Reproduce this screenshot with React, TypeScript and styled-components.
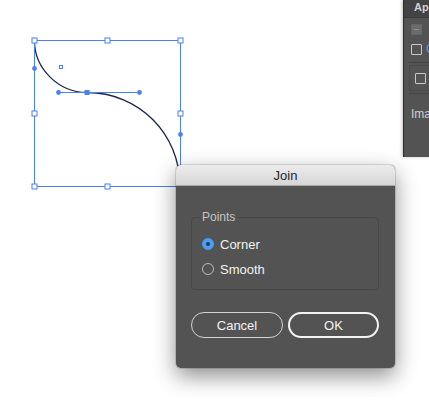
import React from "react";
import styled, { createGlobalStyle } from "styled-components";

const Global = createGlobalStyle`
  html, body { margin: 0; padding: 0; background: #ffffff; }
  body { font-family: "Liberation Sans", Arial, sans-serif; overflow: hidden; }
`;

const Stage = styled.div`
  position: relative;
  width: 429px;
  height: 403px;
  background: #ffffff;
  overflow: hidden;
`;

const Artwork = styled.svg`
  position: absolute;
  left: 0;
  top: 0;
`;

const SidePanel = styled.div`
  position: absolute;
  left: 403px;
  top: 0;
  width: 40px;
  height: 157px;
  background: #535353;
  border-left: 1px solid #2e2e2e;
  box-shadow: -1px 0 3px rgba(0, 0, 0, 0.25);
  display: flex;
  flex-direction: column;
  color: #cfcfcf;
  font-size: 12px;
`;

const PanelHeader = styled.div`
  height: 17px;
  background: #434343;
  border-bottom: 1px solid #3a3a3a;
  padding-left: 10px;
  font-size: 11px;
  font-weight: bold;
  line-height: 14px;
  color: #d2d2d2;
`;

const PanelRow = styled.div<{ $mt: number }>`
  display: flex;
  align-items: center;
  gap: 4px;
  margin-top: ${(p) => p.$mt}px;
  padding-left: 7px;
  height: 12px;
`;

const Check = styled.div<{ $disabled?: boolean }>`
  flex: none;
  width: 9px;
  height: 9px;
  border: 1px solid ${(p) => (p.$disabled ? "#666" : "#c9c9c9")};
  background: ${(p) => (p.$disabled ? "#6b6b6b" : "transparent")};
  border-radius: 1px;
  display: flex;
  align-items: center;
  justify-content: center;
  &::after {
    content: "";
    display: ${(p) => (p.$disabled ? "block" : "none")};
    width: 5px;
    height: 1px;
    background: #8e8e8e;
  }
`;

const BlueLabel = styled.span`
  color: #4a9ff5;
  font-size: 12px;
  white-space: nowrap;
`;

const PanelSep = styled.div<{ $mt: number }>`
  margin-top: ${(p) => p.$mt}px;
  margin-left: 5px;
  height: 1px;
  background: #454545;
`;

const PanelGroup = styled.div`
  margin: 2px 0 0 5px;
  height: 24px;
  border: 1px solid #4a4a4a;
  border-right: none;
  display: flex;
  align-items: center;
  padding-left: 5px;
`;

const PanelText = styled.div`
  margin-top: 13px;
  padding-left: 7px;
  font-size: 12px;
  color: #cfcfcf;
`;

const Dialog = styled.div`
  position: absolute;
  left: 176px;
  top: 165px;
  width: 219px;
  height: 203px;
  border-radius: 5px;
  background: #535353;
  box-shadow: 0 8px 22px rgba(0, 0, 0, 0.45), 0 0 0 1px rgba(0, 0, 0, 0.12);
  display: flex;
  flex-direction: column;
  overflow: hidden;
`;

const TitleBar = styled.div`
  height: 21px;
  flex: none;
  background: linear-gradient(#ececec, #d6d6d6);
  border-bottom: 1px solid #a9a9a9;
  box-sizing: border-box;
  display: flex;
  align-items: center;
  justify-content: center;
  font-size: 13px;
  color: #262626;
`;

const DialogBody = styled.div`
  display: flex;
  flex-direction: column;
  padding: 31px 16px 0 15px;
`;

const GroupBox = styled.div`
  position: relative;
  border: 1px solid #474747;
  border-radius: 4px;
  padding: 18px 10px 12px 10px;
  display: flex;
  flex-direction: column;
  gap: 9px;
`;

const Legend = styled.span`
  position: absolute;
  left: 8px;
  top: -9px;
  padding: 0 2px;
  background: #535353;
  font-size: 12px;
  line-height: 16px;
  color: #c4c4c4;
`;

const RadioRow = styled.label`
  display: flex;
  align-items: center;
  gap: 6px;
  height: 16px;
  font-size: 13px;
  color: #f2f2f2;
`;

const RadioDot = styled.span<{ $checked?: boolean }>`
  flex: none;
  width: 12px;
  height: 12px;
  box-sizing: border-box;
  border-radius: 50%;
  border: 1px solid ${(p) => (p.$checked ? "#4a9ff5" : "#b9b9b9")};
  background: ${(p) => (p.$checked ? "#4a9ff5" : "transparent")};
  display: flex;
  align-items: center;
  justify-content: center;
  &::after {
    content: "";
    display: ${(p) => (p.$checked ? "block" : "none")};
    width: 4px;
    height: 4px;
    border-radius: 50%;
    background: #26384f;
  }
`;

const ButtonRow = styled.div`
  display: flex;
  gap: 5px;
  margin-top: 22px;
`;

const PillButton = styled.button<{ $primary?: boolean }>`
  height: 26px;
  width: ${(p) => (p.$primary ? 91 : 92)}px;
  box-sizing: border-box;
  border-radius: 13px;
  background: #535353;
  border: ${(p) => (p.$primary ? "2px solid #f4f4f4" : "1px solid #d4d4d4")};
  color: #f4f4f4;
  font-family: "Liberation Sans", Arial, sans-serif;
  font-size: 13px;
  padding: 0;
  display: flex;
  align-items: center;
  justify-content: center;
`;

const BLUE = "#4b7ff5";

const Handle: React.FC<{ x: number; y: number; s?: number }> = ({ x, y, s = 5 }) => (
  <rect x={x - s / 2} y={y - s / 2} width={s} height={s} fill="#fff" stroke={BLUE} strokeWidth={1} />
);

export default function App() {
  return (
    <>
      <Global />
      <Stage>
        <Artwork width={429} height={403} viewBox="0 0 429 403">
          <rect x={34.5} y={40.5} width={146} height={146} fill="none" stroke={BLUE} strokeWidth={1} />
          <path
            d="M34.5,41 C34.5,68 58,92.5 87,92.5 C139,92.5 180,134 180,186"
            fill="none"
            stroke="#1d2550"
            strokeWidth={1.3}
          />
          <line x1={58.5} y1={92.5} x2={139.5} y2={92.5} stroke={BLUE} strokeWidth={1} />
          <line x1={34.5} y1={41} x2={34.5} y2={68} stroke={BLUE} strokeWidth={1} />
          <circle cx={58.5} cy={92.5} r={2.4} fill={BLUE} />
          <circle cx={139.5} cy={92.5} r={2.4} fill={BLUE} />
          <circle cx={34.5} cy={68.5} r={2.4} fill={BLUE} />
          <circle cx={180.5} cy={134.5} r={2.4} fill={BLUE} />
          <rect x={84.5} y={90} width={5} height={5} fill={BLUE} />
          <rect x={59.5} y={65.5} width={3} height={3} fill="#fff" stroke={BLUE} strokeWidth={1} />
          <Handle x={34.5} y={40.5} />
          <Handle x={107.5} y={40.5} />
          <Handle x={180.5} y={40.5} />
          <Handle x={34.5} y={113.5} />
          <Handle x={180.5} y={113.5} />
          <Handle x={34.5} y={186.5} />
          <Handle x={107.5} y={186.5} />
          <Handle x={180.5} y={186.5} />
        </Artwork>

        <SidePanel>
          <PanelHeader>Ap</PanelHeader>
          <PanelRow $mt={5}>
            <Check $disabled />
          </PanelRow>
          <PanelRow $mt={8}>
            <Check />
            <BlueLabel>Clip</BlueLabel>
          </PanelRow>
          <PanelSep $mt={7} />
          <PanelGroup>
            <Check />
          </PanelGroup>
          <PanelSep $mt={2} />
          <PanelText>Image</PanelText>
        </SidePanel>

        <Dialog>
          <TitleBar>Join</TitleBar>
          <DialogBody>
            <GroupBox>
              <Legend>Points</Legend>
              <RadioRow>
                <RadioDot $checked />
                Corner
              </RadioRow>
              <RadioRow>
                <RadioDot />
                Smooth
              </RadioRow>
            </GroupBox>
            <ButtonRow>
              <PillButton>Cancel</PillButton>
              <PillButton $primary>OK</PillButton>
            </ButtonRow>
          </DialogBody>
        </Dialog>
      </Stage>
    </>
  );
}
